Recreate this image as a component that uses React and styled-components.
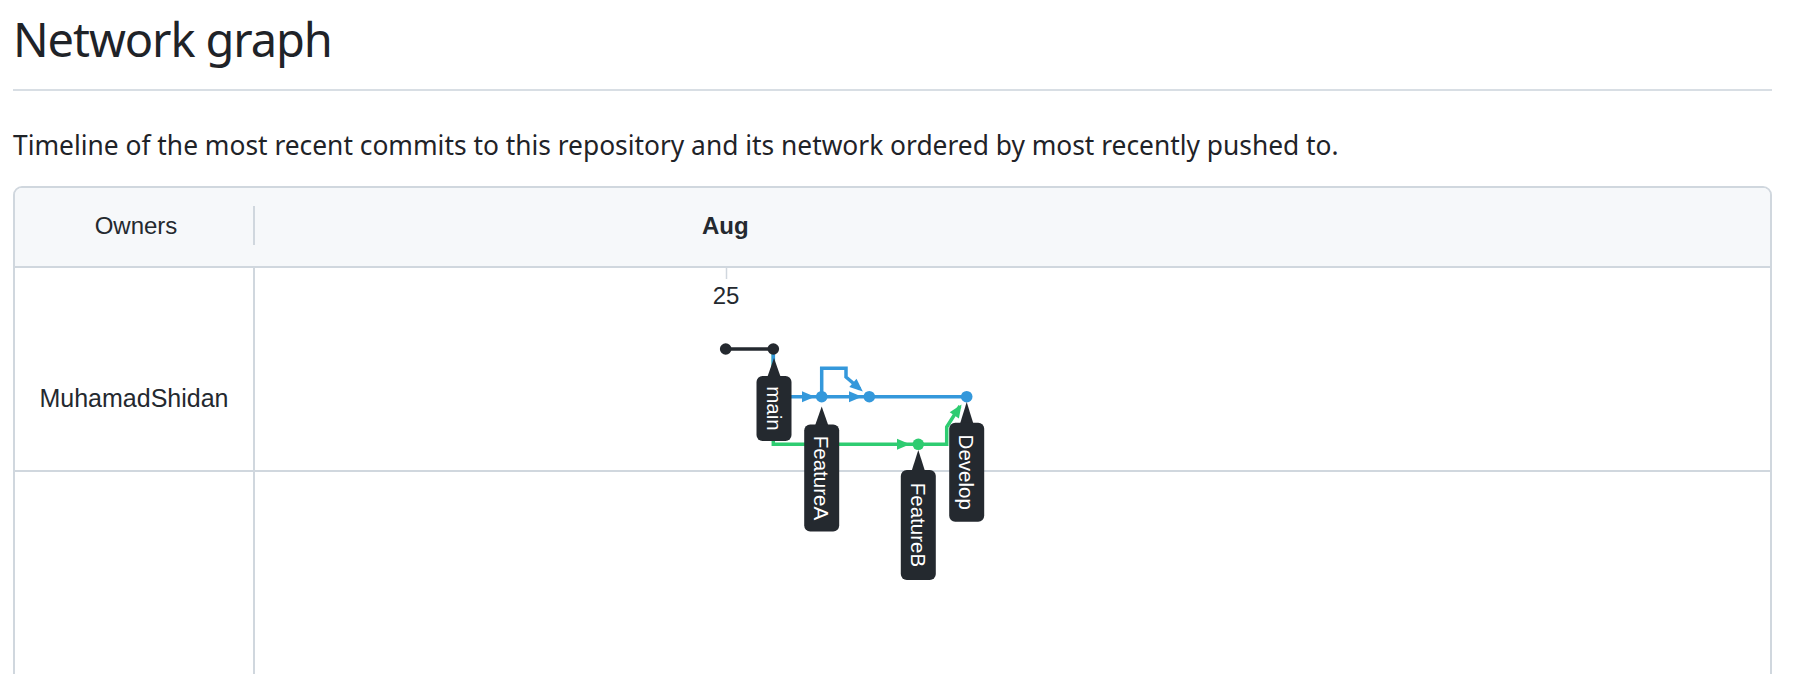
import React from 'react';
import styled, { createGlobalStyle } from 'styled-components';

const GlobalStyle = createGlobalStyle`
  html, body {
    margin: 0;
    padding: 0;
    overflow: hidden;
    background: #ffffff;
  }
  body {
    font-family: 'Noto Sans', 'Open Sans', sans-serif;
    color: #1f2328;
  }
`;

const BLACK = '#24292f';
const BLUE = '#3498db';
const GREEN = '#2ecc71';

// graph coordinates are in page pixels, the svg viewBox starts where the graph column starts
const ORIGIN_X = 255;
const ORIGIN_Y = 268;
const CANVAS_W = 1515;
const CANVAS_H = 420;

const labels = [
  { name: 'main', cx: 774, tip: 358, top: 376, h: 65 },
  { name: 'FeatureA', cx: 821.7, tip: 406.5, top: 424.5, h: 107 },
  { name: 'FeatureB', cx: 918.3, tip: 450, top: 470, h: 110 },
  { name: 'Develop', cx: 966.7, tip: 402, top: 422.7, h: 99 },
];

const Page = styled.div`
  padding: 0 22px 0 13px;
`;

const Title = styled.h2`
  margin: 9px 0 0;
  padding-bottom: 20px;
  font-size: 47px;
  line-height: 60px;
  letter-spacing: -1.1px;
  font-weight: 400;
  color: #1f2328;
  border-bottom: 2px solid #d8dee4;
`;

const Lead = styled.p`
  margin: 34px 0 21px;
  font-size: 26.35px;
  line-height: 40px;
  color: #1f2328;
`;

const Graph = styled.div`
  border: 2px solid #d0d7de;
  border-radius: 9px;
  overflow: hidden;
  font-family: 'Liberation Sans', Arial, sans-serif;
  color: ${BLACK};
`;

const Header = styled.div`
  display: flex;
  align-items: center;
  height: 80px;
  padding-bottom: 3px;
  box-sizing: border-box;
  background: #f6f8fa;
  border-bottom: 2px solid #d0d7de;
`;

const OwnersHead = styled.div`
  width: 240px;
  height: 39px;
  padding-left: 4px;
  box-sizing: border-box;
  border-right: 2px solid #d0d7de;
  display: flex;
  align-items: center;
  justify-content: center;
  font-size: 24px;
`;

const MonthHead = styled.div`
  flex: 1;
  padding-left: 447px;
  font-size: 24px;
  font-weight: 700;
`;

const Body = styled.div`
  position: relative;
  display: grid;
  grid-template-columns: 240px 1fr;
  grid-template-rows: 204px 320px;
`;

const OwnerCell = styled.div`
  box-sizing: border-box;
  border-right: 2px solid #d0d7de;
  border-bottom: ${(p) => (p.$last ? 'none' : '2px solid #d0d7de')};
  padding-top: 115px;
  text-align: center;
  font-size: 25px;
  line-height: 30px;
`;

const LaneCell = styled.div`
  box-sizing: border-box;
  border-bottom: ${(p) => (p.$last ? 'none' : '2px solid #d0d7de')};
`;

const Canvas = styled.svg`
  position: absolute;
  top: 0;
  left: 240px;
  display: block;
  overflow: visible;
`;

function Arrow({ x, y, angle = 0, color }) {
  return (
    <polygon
      points={`${x},${y} ${x - 13},${y - 5.5} ${x - 13},${y + 5.5}`}
      fill={color}
      transform={`rotate(${angle} ${x} ${y})`}
    />
  );
}

function Dot({ x, y, color }) {
  return <circle cx={x} cy={y} r="5.8" fill={color} />;
}

function Label({ name, cx, tip, top, h }) {
  const mid = top + h / 2;
  return (
    <g>
      <polygon points={`${cx},${tip} ${cx - 7},${top + 2} ${cx + 7},${top + 2}`} fill={BLACK} />
      <rect x={cx - 17.5} y={top} width="35" height={h} rx="6" fill={BLACK} />
      <text
        x={cx}
        y={mid}
        transform={`rotate(90 ${cx} ${mid})`}
        textAnchor="middle"
        dominantBaseline="central"
        fill="#ffffff"
        fontSize="20.5"
        fontFamily="'Liberation Sans', Arial, sans-serif"
      >
        {name}
      </text>
    </g>
  );
}

function NetworkCanvas() {
  const line = { fill: 'none', strokeWidth: 3.5, strokeLinejoin: 'miter' };
  return (
    <Canvas
      width={CANVAS_W}
      height={CANVAS_H}
      viewBox={`${ORIGIN_X} ${ORIGIN_Y} ${CANVAS_W} ${CANVAS_H}`}
    >
      <line x1="726.5" y1="267" x2="726.5" y2="279" stroke="#d0d7de" strokeWidth="1.5" />
      <text x="726" y="304" textAnchor="middle" fontSize="24" fill={BLACK} fontFamily="'Liberation Sans', Arial, sans-serif">
        25
      </text>

      {/* green branch */}
      <polyline points="773.3,349 773.3,444.3 918.3,444.3" stroke={GREEN} {...line} />
      <Arrow x={910} y={444.3} color={GREEN} />
      <polyline points="918.3,444.3 946.7,444.3 946.7,427 960,406" stroke={GREEN} {...line} />
      <Arrow x={961.5} y={404.5} angle={-56.5} color={GREEN} />

      {/* blue branch */}
      <polyline points="773.3,349 773.3,396.7 966.7,396.7" stroke={BLUE} {...line} />
      <Arrow x={815} y={396.7} color={BLUE} />
      <Arrow x={862} y={396.7} color={BLUE} />
      <polyline points="821.7,396.7 821.7,368.3 846,368.3 846,377 860,389" stroke={BLUE} {...line} />
      <Arrow x={862.8} y={391.4} angle={40.6} color={BLUE} />

      {/* main */}
      <line x1="725.7" y1="349" x2="773.3" y2="349" stroke={BLACK} strokeWidth="3.5" />
      <Dot x={725.7} y={349} color={BLACK} />
      <Dot x={773.3} y={349} color={BLACK} />

      <Dot x={821.7} y={396.7} color={BLUE} />
      <Dot x={869.3} y={396.7} color={BLUE} />
      <Dot x={966.7} y={396.7} color={BLUE} />
      <Dot x={918.3} y={444.3} color={GREEN} />

      {labels.map((l) => (
        <Label key={l.name} {...l} />
      ))}
    </Canvas>
  );
}

export default function App() {
  return (
    <Page>
      <GlobalStyle />
      <Title>Network graph</Title>
      <Lead>
        Timeline of the most recent commits to this repository and its network ordered by most recently pushed to.
      </Lead>
      <Graph>
        <Header>
          <OwnersHead>Owners</OwnersHead>
          <MonthHead>Aug</MonthHead>
        </Header>
        <Body>
          <OwnerCell>MuhamadShidan</OwnerCell>
          <LaneCell />
          <OwnerCell $last />
          <LaneCell $last />
          <NetworkCanvas />
        </Body>
      </Graph>
    </Page>
  );
}
